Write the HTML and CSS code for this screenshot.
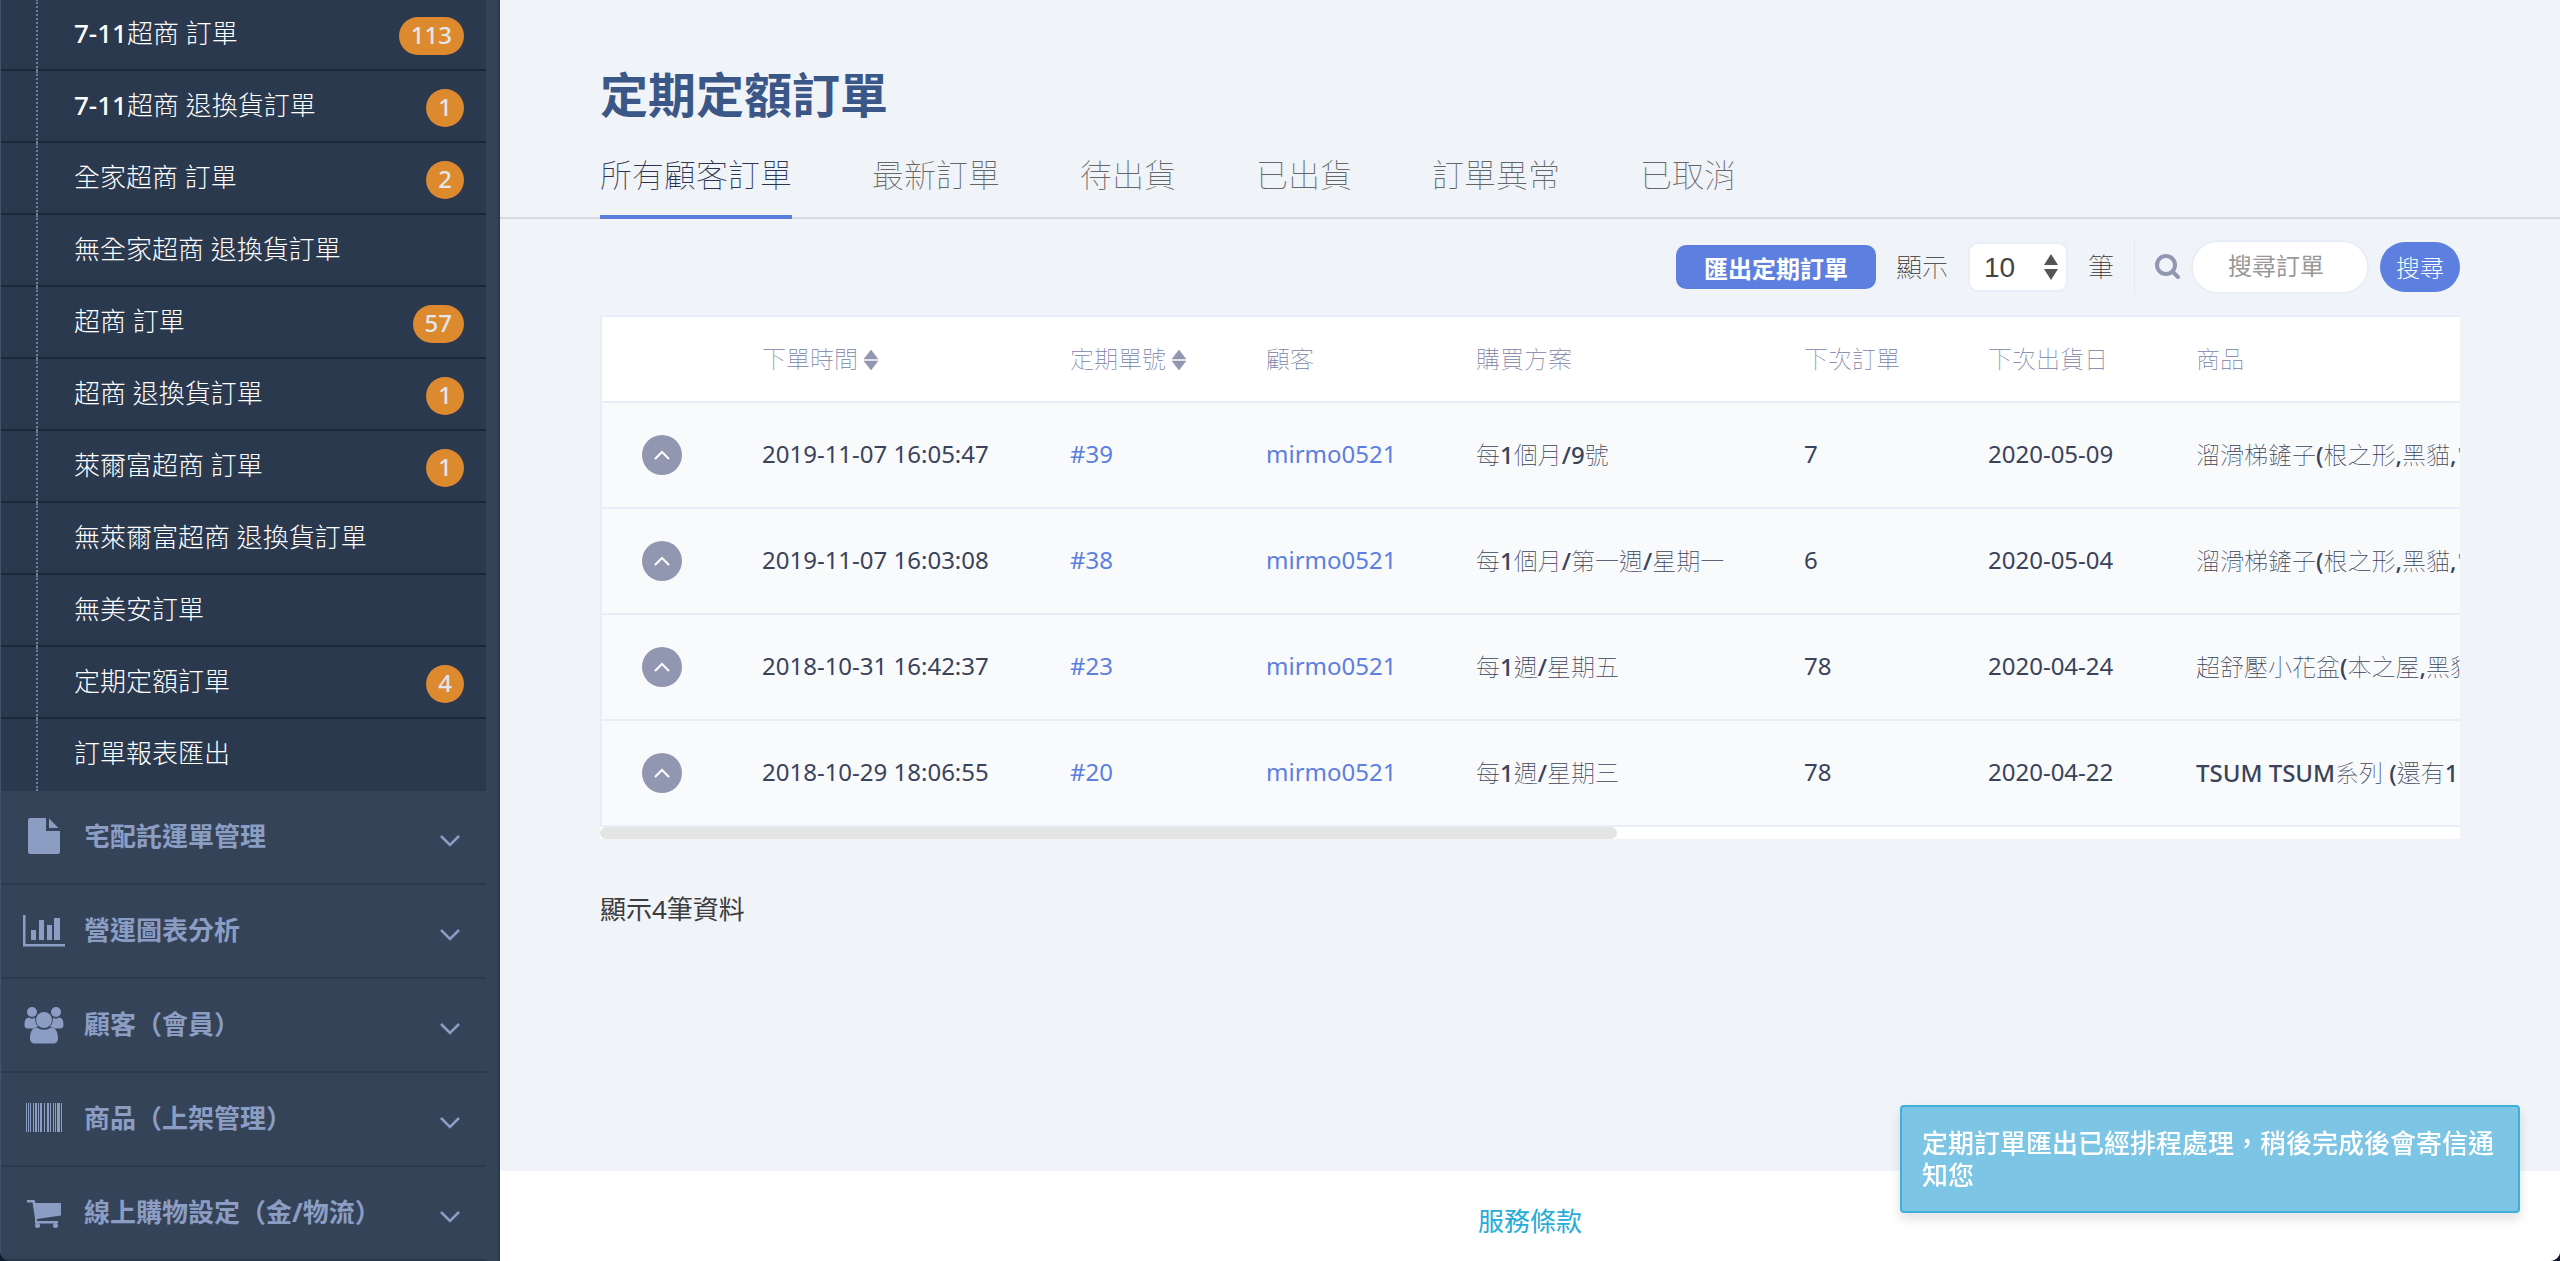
FILE: index.html
```html
<!DOCTYPE html>
<html lang="zh-Hant">
<head>
<meta charset="utf-8">
<title>定期定額訂單</title>
<link rel="stylesheet" href="styles.css">
</head>
<body>
<svg class="defs" aria-hidden="true">
  <symbol id="chevron" viewBox="0 0 20 12"><path d="M1 1l9 9 9-9" fill="none" stroke="currentColor" stroke-width="2.500"/></symbol>
  <symbol id="sort" viewBox="0 0 16 20"><path d="M8 0l7 9H1zM8 20l7-9H1z" fill="currentColor" stroke="currentColor" stroke-width=".5"/></symbol>
</svg>
<div class="app">
  <nav class="sidebar">
    <ul class="submenu">
      <li><a href="#"><span class="latin">7-11</span>超商 訂單</a><span class="badge">113</span></li>
      <li><a href="#"><span class="latin">7-11</span>超商 退換貨訂單</a><span class="badge">1</span></li>
      <li><a href="#">全家超商 訂單</a><span class="badge">2</span></li>
      <li><a href="#">無全家超商 退換貨訂單</a></li>
      <li><a href="#">超商 訂單</a><span class="badge">57</span></li>
      <li><a href="#">超商 退換貨訂單</a><span class="badge">1</span></li>
      <li><a href="#">萊爾富超商 訂單</a><span class="badge">1</span></li>
      <li><a href="#">無萊爾富超商 退換貨訂單</a></li>
      <li><a href="#">無美安訂單</a></li>
      <li><a href="#">定期定額訂單</a><span class="badge">4</span></li>
      <li><a href="#">訂單報表匯出</a></li>
    </ul>
    <ul class="groups">
      <li><a href="#">
        <svg class="icon" viewBox="0 0 44 44"><path d="M8 3h16v13h14v21a2 2 0 0 1-2 2H8a2 2 0 0 1-2-2V5a2 2 0 0 1 2-2zM27 3.500l9.500 9.500H27z" fill="currentColor"/></svg>
        <span>宅配託運單管理</span><svg class="chev"><use href="#chevron"/></svg></a></li>
      <li><a href="#">
        <svg class="icon" viewBox="0 0 44 44"><path d="M1 6h2.500v29H43v2.500H1zM9 21h5v10H9zM17 11h5v20h-5zM25 16h5v15h-5zM32 9h6v22h-6z" fill="currentColor"/></svg>
        <span>營運圖表分析</span><svg class="chev"><use href="#chevron"/></svg></a></li>
      <li><a href="#">
        <svg class="icon" viewBox="0 0 44 44"><g fill="currentColor"><circle cx="10" cy="9" r="5"/><circle cx="34" cy="9" r="5"/><path d="M7 14.500c2 1.500 4 1.500 6 0 0 4 1 7 3 9-2 .5-3 1-4 2H6c-3 0-3.500-2-3.500-4 0-4 1.500-7 4.500-7zM37 14.500c-2 1.500-4 1.500-6 0 0 4-1 7-3 9 2 .5 3 1 4 2h6c3 0 3.500-2 3.500-4 0-4-1.500-7-4.500-7z"/><circle cx="22" cy="17" r="8"/><path d="M15 24.500c4 3 10 3 14 0 5 0 7 5 7 11 0 3-2 5-5 5H13c-3 0-5-2-5-5 0-6 2-11 7-11z"/></g></svg>
        <span>顧客（會員）</span><svg class="chev"><use href="#chevron"/></svg></a></li>
      <li><a href="#">
        <svg class="icon" viewBox="0 0 44 44"><path d="M4 6h1v29H4zM6 6h1v29H6zM8 6h1v29H8zM11 6h1v29h-1zM13 6h2v29h-2zM16 6h1v29h-1zM18 6h2v29h-2zM22 6h1v29h-1zM25 6h2v29h-2zM28 6h1v29h-1zM31 6h1v29h-1zM33 6h1v29h-1zM35 6h3v29h-3zM39 6h1v29h-1z" fill="currentColor"/></svg>
        <span>商品（上架管理）</span><svg class="chev"><use href="#chevron"/></svg></a></li>
      <li><a href="#">
        <svg class="icon" viewBox="0 0 44 44"><g fill="currentColor"><path d="M5 9h7.500l1 3H39v12.500l-24 3.500v2h21v2.500H13v-5L10.500 11.500H5z"/><circle cx="15.500" cy="34.500" r="2.500"/><circle cx="33.500" cy="34.500" r="2.500"/></g></svg>
        <span>線上購物設定（金/物流）</span><svg class="chev"><use href="#chevron"/></svg></a></li>
    </ul>
  </nav>
  <div class="page">
    <main>
      <h1>定期定額訂單</h1>
      <nav class="tabs">
        <a class="active" href="#">所有顧客訂單</a><a href="#">最新訂單</a><a href="#">待出貨</a><a href="#">已出貨</a><a href="#">訂單異常</a><a href="#">已取消</a>
      </nav>
      <div class="content">
        <form class="toolbar">
          <button type="button" class="export">匯出定期訂單</button>
          <label for="size" class="size-label">顯示</label>
          <span class="select"><select id="size"><option>10</option></select><svg viewBox="0 0 14 26" aria-hidden="true"><path d="M7 0l7 11H0zM7 26l7-11H0z" fill="currentColor"/></svg></span>
          <span class="unit">筆</span>
          <label for="search" class="search-label"><svg viewBox="0 0 26 26" aria-label="搜尋"><path d="M17.500 17.500L23 23" stroke="currentColor" stroke-width="4" stroke-linecap="round"/><circle cx="11" cy="11" r="9" fill="none" stroke="currentColor" stroke-width="4"/></svg></label>
          <input id="search" type="text" placeholder="搜尋訂單">
          <button type="button" class="search-btn">搜尋</button>
        </form>
        <div class="table-wrap">
          <table>
            <colgroup><col class="c-toggle"><col class="c-time"><col class="c-id"><col class="c-user"><col class="c-plan"><col class="c-next"><col class="c-ship"><col class="c-item"></colgroup>
            <thead><tr><th></th><th>下單時間<svg class="sort"><use href="#sort"/></svg></th><th>定期單號<svg class="sort"><use href="#sort"/></svg></th><th>顧客</th><th>購買方案</th><th>下次訂單</th><th>下次出貨日</th><th>商品</th></tr></thead>
            <tbody>
              <tr><td><button type="button" class="toggle" aria-label="展開"><svg viewBox="0 0 16 10"><path d="M1 9l7-7 7 7" fill="none" stroke="currentColor" stroke-width="2"/></svg></button></td><td>2019-11-07 16:05:47</td><td><a href="#">#39</a></td><td><a href="#">mirmo0521</a></td><td class="thin">每<span class="latin">1</span>個月<span class="latin">/9</span>號</td><td>7</td><td>2020-05-09</td><td class="thin">溜滑梯鏟子<span class="latin">(</span>根之形<span class="latin">,</span>黑貓<span class="latin">,</span>常</td></tr>
              <tr><td><button type="button" class="toggle" aria-label="展開"><svg viewBox="0 0 16 10"><path d="M1 9l7-7 7 7" fill="none" stroke="currentColor" stroke-width="2"/></svg></button></td><td>2019-11-07 16:03:08</td><td><a href="#">#38</a></td><td><a href="#">mirmo0521</a></td><td class="thin">每<span class="latin">1</span>個月<span class="latin">/</span>第一週<span class="latin">/</span>星期一</td><td>6</td><td>2020-05-04</td><td class="thin">溜滑梯鏟子<span class="latin">(</span>根之形<span class="latin">,</span>黑貓<span class="latin">,</span>常</td></tr>
              <tr><td><button type="button" class="toggle" aria-label="展開"><svg viewBox="0 0 16 10"><path d="M1 9l7-7 7 7" fill="none" stroke="currentColor" stroke-width="2"/></svg></button></td><td>2018-10-31 16:42:37</td><td><a href="#">#23</a></td><td><a href="#">mirmo0521</a></td><td class="thin">每<span class="latin">1</span>週<span class="latin">/</span>星期五</td><td>78</td><td>2020-04-24</td><td class="thin">超舒壓小花盆<span class="latin">(</span>本之屋<span class="latin">,</span>黑貓</td></tr>
              <tr><td><button type="button" class="toggle" aria-label="展開"><svg viewBox="0 0 16 10"><path d="M1 9l7-7 7 7" fill="none" stroke="currentColor" stroke-width="2"/></svg></button></td><td>2018-10-29 18:06:55</td><td><a href="#">#20</a></td><td><a href="#">mirmo0521</a></td><td class="thin">每<span class="latin">1</span>週<span class="latin">/</span>星期三</td><td>78</td><td>2020-04-22</td><td class="thin"><span class="latin">TSUM TSUM</span>系列<span class="latin"> (</span>還有<span class="latin">1</span></td></tr>
            </tbody>
          </table>
          <div class="scrollbar"><div class="thumb"></div></div>
        </div>
        <p class="summary">顯示4筆資料</p>
      </div>
    </main>
    <footer><a href="#">服務條款</a></footer>
  </div>
</div>
<div class="toast" role="status">定期訂單匯出已經排程處理，稍後完成後會寄信通知您</div>
</body>
</html>
```

FILE: styles.css
```css
* { box-sizing: border-box; }
body {
  margin: 0;
  background: #0d1b2e;
  font-family: "Noto Sans", "Noto Sans CJK TC", sans-serif;
  font-size: 24px;
  color: #3a4359;
}
button, input, select { font: inherit; margin: 0; border: 0; }
ul { list-style: none; margin: 0; padding: 0; }
a { text-decoration: none; color: inherit; }
svg { display: block; flex: none; }
.defs { position: absolute; width: 0; height: 0; }
.latin { font-weight: 500; }

.app { display: flex; height: 100vh; overflow: hidden; border-radius: 0 0 10px 10px; }

/* sidebar */
.sidebar {
  flex: 0 0 500px;
  padding-right: 12px;
  background: #354359;
  border-left: 1px solid #43526a;
  border-right: 2px solid #2b394f;
  font-size: 26px;
  overflow: hidden;
}
.submenu {
  margin-top: -1px;
  background: #2b394f;
  color: #fff;
  font-weight: 300;
}
.submenu li {
  display: flex;
  align-items: center;
  justify-content: space-between;
  height: 72px;
  padding: 0 22px 0 35px;
  border-bottom: 2px solid #1c2739;
}
.submenu li:last-child { border-bottom-color: #2b394f; }
.submenu a {
  flex: 1;
  padding-left: 36px;
  height: 72px;
  margin-bottom: -2px;
  line-height: 69px;
  border-left: 2px dotted #6d7c97;
}
.badge {
  margin-top: 4px;
  height: 38px;
  padding: 0 12px;
  border-radius: 19px;
  background: #dc8a2d;
  color: #e3e6ec;
  font-size: 24px;
  font-weight: 500;
  line-height: 35px;
}
.groups { color: #8b9dc3; font-weight: 700; }
.groups li { border-bottom: 2px solid #2b394f; }
.groups a { display: flex; align-items: center; height: 92px; padding: 0 26px 0 21px; }
.groups span { flex: 1; padding: 0 0 3px 18px; line-height: 40px; }
.icon { width: 44px; height: 44px; }
.chev { width: 20px; height: 12px; margin-top: 8px; }

/* page */
.page { flex: 1; min-width: 0; display: flex; flex-direction: column; background: #f0f3f8; }
main { flex: 1; }
h1 { margin: 0; padding: 60px 100px 0; font-size: 48px; line-height: 70px; font-weight: 700; color: #3b5787; }
.tabs {
  display: flex;
  gap: 80px;
  padding: 0 100px;
  height: 89px;
  border-bottom: 2px solid #d6d9df;
  font-size: 32px;
  font-weight: 100;
  color: #666;
}
.tabs a { height: 89px; padding-top: 20px; line-height: 50px; }
.tabs .active { color: #2b3450; border-bottom: 4px solid #5c7fe0; }
.content { padding: 20px 100px 0; }

.toolbar { display: flex; align-items: center; justify-content: flex-end; height: 56px; font-weight: 300; }
.export { width: 200px; height: 44px; padding: 0; border-radius: 10px; background: #5c7fe0; color: #fff; font-weight: 700; }
.size-label, .unit { font-size: 26px; font-weight: 100; line-height: 40px; color: #333; }
.size-label { margin: 0 20px; }
.select { position: relative; color: #555; }
.select select {
  width: 100px;
  height: 50px;
  padding: 0 14px;
  appearance: none;
  background: #fff;
  border: 2px solid #e9edf7;
  border-radius: 10px;
  color: #444;
  font-family: "Liberation Sans", sans-serif;
  font-size: 28px;
  font-weight: 400;
}
.select svg { position: absolute; right: 10px; top: 12px; width: 14px; height: 26px; pointer-events: none; }
.unit { margin: 0 20px; }
.search-label { display: flex; align-items: center; height: 56px; padding: 0 10px 0 20px; border-left: 1px solid #e3e8f2; color: #9197b0; }
.search-label svg { width: 26px; height: 26px; }
.toolbar input {
  width: 178px;
  height: 54px;
  padding: 0 35px 3px;
  border: 2px solid #e9edf7;
  border-radius: 27px;
  background: #fff;
  font-weight: 400;
}
.toolbar input::placeholder { color: #999; }
.search-btn { width: 80px; height: 50px; margin-left: 11px; padding: 0 0 2px; border-radius: 25px; background: #5c7fe0; color: #fff; font-weight: 300; }

.table-wrap { margin-top: 20px; overflow: hidden; background: #fff; }
table { width: 100%; table-layout: fixed; border-collapse: separate; border-spacing: 0; border-top: 2px solid #e9edf7; border-left: 2px solid #e9edf7; }
.c-toggle { width: 136px; }
.c-time { width: 308px; }
.c-id { width: 196px; }
.c-user { width: 210px; }
.c-plan { width: 328px; }
.c-next { width: 184px; }
.c-ship { width: 208px; }
th, td { padding: 0 0 4px 24px; text-align: left; white-space: nowrap; border-bottom: 2px solid #e9edf7; }
th { height: 86px; font-weight: 100; color: #7880a4; }
td { height: 106px; background: #f9fafc; }
td.thin { font-weight: 100; }
td:first-child { padding: 0 0 0 40px; }
td a { color: #5c7fe0; }
.sort { display: inline-block; width: 16px; height: 20px; margin-left: 5px; vertical-align: -2px; color: #9197b0; }
.toggle { display: flex; align-items: center; justify-content: center; width: 40px; height: 40px; padding: 0; border-radius: 50%; background: #9197b0; color: #fff; }
.toggle svg { width: 16px; height: 10px; }
.scrollbar { height: 12px; }
.thumb { width: 54.7%; height: 12px; border-radius: 6px; background: #e4e4e4; }
.summary { margin: 50px 0 0; font-size: 26px; line-height: 40px; color: #3c3c3c; }

footer { height: 90px; padding-top: 30px; background: #fff; text-align: center; font-size: 26px; line-height: 40px; color: #26acd8; }

.toast {
  position: fixed;
  right: 40px;
  bottom: 48px;
  width: 620px;
  padding: 20px;
  border: 2px solid #3fb0d8;
  border-radius: 4px;
  background: #7cc5e4;
  box-shadow: 0 6px 12px rgba(0, 0, 0, .12);
  color: #fff;
  font-size: 26px;
  font-weight: 500;
  line-height: 32px;
}
```
